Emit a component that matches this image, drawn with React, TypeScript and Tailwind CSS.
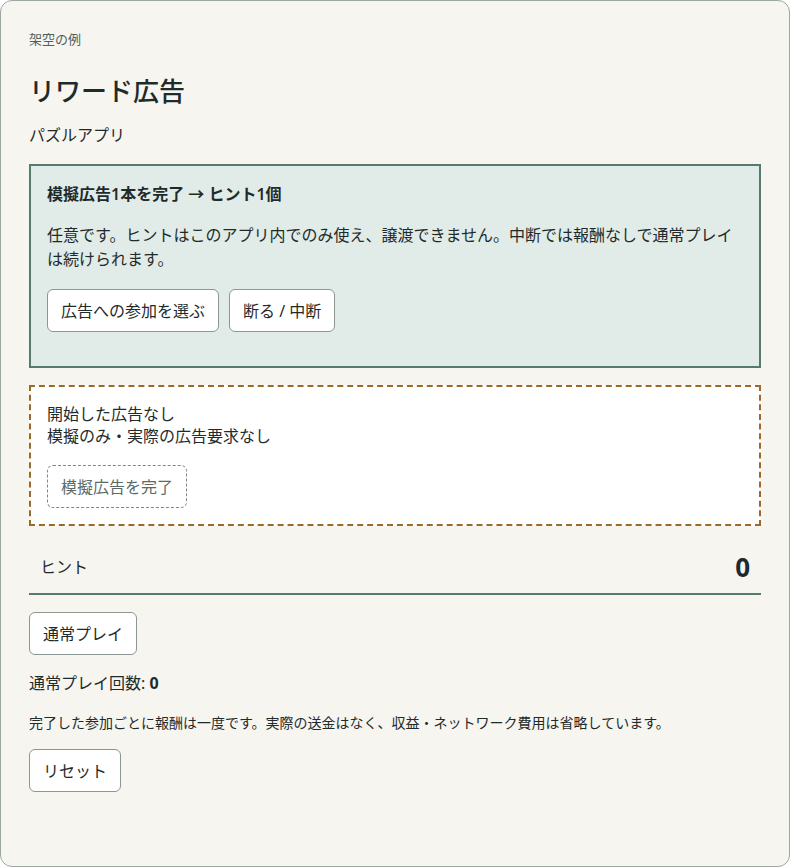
export default function App() {
  const font = { fontFamily: '"Noto Sans", "Noto Sans CJK JP", sans-serif' };
  return (
    <div style={font} className="h-[867px] w-[790px] rounded-xl border border-[#9da7a2] bg-[#f6f5f0] px-[28px] pt-[28px] text-[#1f2b2b]">
      <p className="text-[13px] leading-5 text-[#4f605b]">架空の例</p>
      <h1 className="mt-[25px] text-[26px] font-medium leading-[34px]">リワード広告</h1>
      <p className="mt-[15px] text-base leading-6">パズルアプリ</p>

      <section className="mt-[17px] border-2 border-[#557a70] bg-[#e1ebe7] px-4 pb-[34px] pt-4">
        <h2 className="text-base font-semibold leading-6">模擬広告1本を完了 → ヒント1個</h2>
        <p className="mt-[17px] text-base leading-[24px]">
          任意です。ヒントはこのアプリ内でのみ使え、譲渡できません。中断では報酬なしで通常プレイは続けられます。
        </p>
        <div className="mt-[18px] flex gap-2.5">
          <button className="flex h-[43px] items-center rounded-md border border-[#8c9692] bg-white px-[13px] text-base">
            広告への参加を選ぶ
          </button>
          <button className="flex h-[43px] items-center rounded-md border border-[#8c9692] bg-white px-[13px] text-base">
            断る / 中断
          </button>
        </div>
      </section>

      <section className="mt-[17px] border-2 border-dashed border-[#9a6a2a] bg-white p-4">
        <p className="text-base leading-[22px]">開始した広告なし</p>
        <p className="text-base leading-[22px]">模擬のみ・実際の広告要求なし</p>
        <button className="mt-[18px] flex h-[43px] items-center rounded-md border border-dashed border-[#7d8784] bg-white px-[13px] text-base text-[#5d6b67]">
          模擬広告を完了
        </button>
      </section>

      <div className="mt-[15px] flex items-center justify-between border-b-2 border-[#557a70] px-[11px] py-2">
        <span className="text-base leading-6">ヒント</span>
        <span className="text-[26px] font-bold leading-9 text-[#1b2a30]">0</span>
      </div>

      <button className="mt-[17px] flex h-[43px] items-center rounded-md border border-[#8c9692] bg-white px-[13px] text-base">
        通常プレイ
      </button>
      <p className="mt-[16px] text-base leading-6">
        通常プレイ回数: <span className="font-bold">0</span>
      </p>
      <p className="mt-[17px] text-[14px] leading-[21px]">
        完了した参加ごとに報酬は一度です。実際の送金はなく、収益・ネットワーク費用は省略しています。
      </p>
      <button className="mt-[16px] flex h-[43px] items-center rounded-md border border-[#8c9692] bg-white px-[13px] text-base">
        リセット
      </button>
    </div>
  );
}
